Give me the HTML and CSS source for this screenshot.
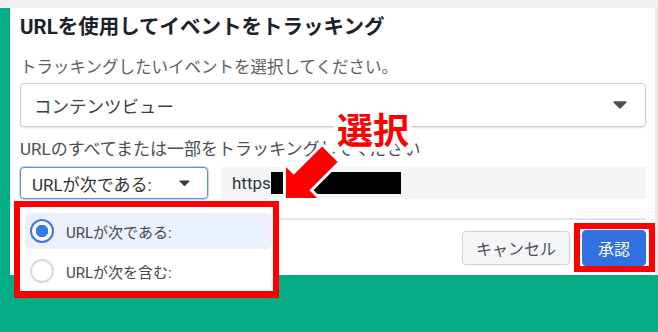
FILE: index.html
```html
<!DOCTYPE html>
<html lang="ja">
<head>
    <meta charset="UTF-8">
    <meta name="viewport" content="width=device-width, initial-scale=1.0">
    <title>URLを使用してイベントをトラッキング</title>
    <link rel="stylesheet" href="styles.css">
</head>
<body>
    <div class="topbar"></div>
    <div class="stage">
        <div class="dialog">
            <h1 class="title">URLを使用してイベントをトラッキング</h1>
            <p class="lead">トラッキングしたいイベントを選択してください。</p>
            <div class="select select-event">
                <span>コンテンツビュー</span>
                <svg class="caret" width="14" height="8" viewBox="0 0 14 8"><path d="M1 1h12L7 7z" fill="#4b4f56" stroke="#4b4f56" stroke-width="1.5" stroke-linejoin="round"/></svg>
            </div>
            <p class="label">URLのすべてまたは一部をトラッキングしてください</p>
            <div class="url-row">
                <div class="match">
                    <div class="select select-match">
                        <span>URLが次である:</span>
                        <svg class="caret" width="11" height="6" viewBox="0 0 11 6"><path d="M1 1h9L5.5 5.5z" fill="#3a3f47" stroke="#3a3f47" stroke-width="1.2" stroke-linejoin="round"/></svg>
                    </div>
                    <ul class="menu">
                        <li class="option active"><span class="radio"></span>URLが次である:</li>
                        <li class="option"><span class="radio"></span>URLが次を含む:</li>
                    </ul>
                </div>
                <div class="url-input">https<span class="redact"></span></div>
            </div>
            <hr class="divider">
            <div class="actions">
                <button class="btn">キャンセル</button>
                <button class="btn btn-primary">承認<span class="mark"></span></button>
            </div>
            <span class="note">選択</span>
            <svg class="arrow" width="80" height="75" viewBox="0 0 80 75">
                <polygon points="16,63 16,31.9 23.8,39.7 52.1,11.4 67.6,26.9 39.3,55.2 47.1,63" fill="#ff0000" stroke="#ffffff" stroke-width="6" stroke-linejoin="miter" paint-order="stroke"/>
            </svg>
        </div>
        <div class="edge"></div>
    </div>
</body>
</html>
```

FILE: styles.css
```css
* {
    margin: 0;
    padding: 0;
    box-sizing: border-box;
    font-family: Roboto, "Noto Sans CJK JP", sans-serif;
}
body {
    width: 658px;
    height: 332px;
    overflow: hidden;
    background-color: #04ad85;
}
.topbar {
    height: 8px;
    background-color: #efefef;
}
.stage {
    display: flex;
    height: 267px;
}
.dialog {
    position: relative;
    width: 645px;
    margin-left: 10px;
    padding: 7px 9px 0 10px;
    background: white;
}
.edge {
    flex: 1;
    background-color: #e9e9e9;
}
.title {
    font-size: 20.5px;
    line-height: 24px;
    font-weight: bold;
    color: #1d2129;
}
.lead {
    margin-top: 18px;
    font-size: 16.5px;
    line-height: 22px;
    color: #5a5f66;
}
.select {
    display: flex;
    justify-content: space-between;
    align-items: center;
    background: white;
}
.select-event {
    margin-top: 4px;
    height: 44px;
    padding: 0 18px 0 13px;
    border: 1px solid #ccd0d5;
    border-radius: 4px;
    box-shadow: 0 1px 2px rgba(0, 0, 0, 0.12);
    font-size: 17.5px;
    color: #3a3f47;
}
.label {
    margin-top: 11px;
    font-size: 17px;
    line-height: 22px;
    color: #4b4f56;
}
.url-row {
    display: flex;
    gap: 13px;
    margin-top: 7px;
    height: 32px;
}
.match {
    position: relative;
    width: 188px;
}
.select-match {
    height: 32px;
    padding: 0 17px 0 11px;
    border: 1px solid #5b8def;
    border-radius: 4px;
    box-shadow: 0 0 0 1px #c4d6f8;
    font-size: 17px;
    color: #2f343b;
}
.url-input {
    flex: 1;
    display: flex;
    align-items: center;
    padding-left: 11px;
    background-color: #f4f5f7;
    font-size: 17px;
    color: #2f343b;
}
.redact {
    display: inline-block;
    width: 130px;
    height: 22px;
    background: black;
}
.menu {
    position: absolute;
    top: 34px;
    left: -6px;
    width: 265px;
    list-style: none;
    padding: 6px 1px 2px 5px;
    border: 6px solid #ff0000;
    border-bottom-width: 7px;
    background: white;
    z-index: 2;
}
.option {
    display: flex;
    align-items: center;
    gap: 12px;
    height: 36px;
    padding-left: 5px;
    border-radius: 6px;
    font-size: 15px;
    color: #444950;
}
.option + .option {
    margin-top: 4px;
}
.option.active {
    background-color: #ebf1fc;
}
.radio {
    width: 24px;
    height: 24px;
    border: 2px solid #d6d9dd;
    border-radius: 50%;
    background: white;
}
.option.active .radio {
    border-color: #3b78e7;
    background: radial-gradient(circle, #3b78e7 0 6px, white 6.5px);
}
.divider {
    margin-top: 19px;
    border: none;
    height: 2px;
    background-color: #e2e4e8;
}
.actions {
    display: flex;
    justify-content: flex-end;
    align-items: center;
    gap: 12px;
    margin-top: 10px;
    height: 36px;
}
.btn {
    position: relative;
    height: 34px;
    padding: 0 13px;
    border: 1px solid #ccd0d5;
    border-radius: 4px;
    background-color: #f5f6f7;
    font-size: 16px;
    color: #4b4f56;
}
.btn-primary {
    height: 36px;
    padding: 0 15px;
    border-color: #2f6fde;
    background-color: #3070e0;
    color: white;
}
.mark {
    position: absolute;
    top: -8px;
    left: -9px;
    right: -10px;
    bottom: -7px;
    border: 6px solid #ff0000;
}
.note {
    position: absolute;
    left: 327px;
    top: 106px;
    font-size: 36px;
    line-height: 36px;
    font-weight: bold;
    color: #ff0000;
    -webkit-text-stroke: 9px white;
    paint-order: stroke fill;
}
.arrow {
    position: absolute;
    left: 260px;
    top: 127px;
}
```
